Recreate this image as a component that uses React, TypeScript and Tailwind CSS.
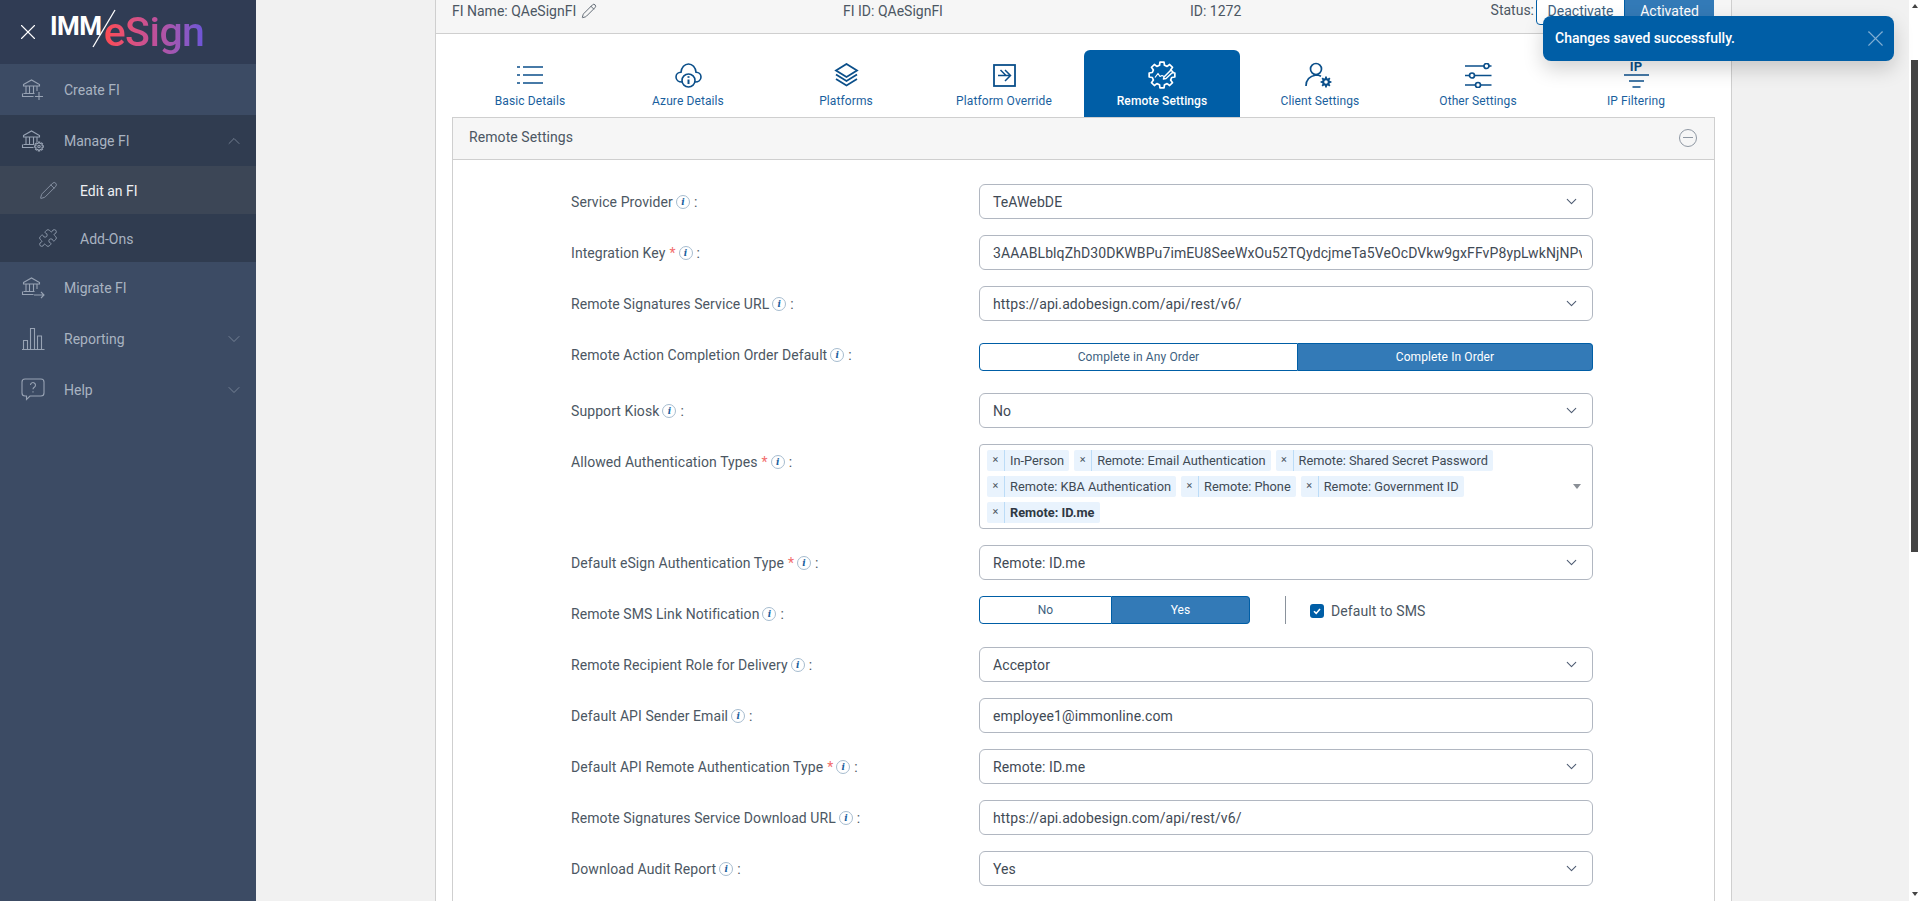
import React from 'react'
import { ChevronDown, ChevronUp, Pencil, Puzzle, X } from 'lucide-react'

function gearPath(cx: number, cy: number, outer: number, inner: number, teeth: number) {
  const pts: string[] = []
  const step = (Math.PI * 2) / teeth
  for (let i = 0; i < teeth; i++) {
    const a = i * step - Math.PI / 2
    const list: [number, number][] = [
      [inner, a - step * 0.32],
      [outer, a - step * 0.2],
      [outer, a + step * 0.2],
      [inner, a + step * 0.32],
    ]
    list.forEach(([r, t]) => pts.push(`${(cx + r * Math.cos(t)).toFixed(2)} ${(cy + r * Math.sin(t)).toFixed(2)}`))
  }
  return `M${pts.join('L')}Z`
}

function BankIcon({ children }: { children?: React.ReactNode }) {
  return (
    <svg width="24" height="22" viewBox="0 0 24 22" fill="none" stroke="#98a3b4" strokeWidth="1.1">
      <path d="M2.5 5.5 10.5 1l8 4.5V7h-16z" />
      <path d="M5 7v7M8.5 7v7M12.5 7v7M16 7v5" />
      <path d="M2.5 14.5h11M1.5 14.5v3h11" />
      {children}
    </svg>
  )
}

function CreateIcon() {
  return (
    <BankIcon>
      <path d="M18 13v8M14 17.5h8" />
    </BankIcon>
  )
}

function ManageIcon() {
  return (
    <BankIcon>
      <path d={gearPath(18, 16.5, 4.4, 3.3, 8)} />
      <circle cx="18" cy="16.5" r="1.2" />
    </BankIcon>
  )
}

function MigrateIcon() {
  return (
    <BankIcon>
      <path d="M13 18h10M20 15l3 3-3 3" />
    </BankIcon>
  )
}

function ReportIcon() {
  return (
    <svg width="24" height="24" viewBox="0 0 24 24" fill="none" stroke="#98a3b4" strokeWidth="1.1">
      <path d="M1 22.5h22.5M2.5 22.5v-9h4v9M9.5 22.5V1.5h4v21M16.5 22.5V9h4v13.5" />
    </svg>
  )
}

function HelpIcon() {
  return (
    <svg width="24" height="23" viewBox="0 0 24 23" fill="none" stroke="#98a3b4" strokeWidth="1.1">
      <path d="M4 1h16a3 3 0 0 1 3 3v11a3 3 0 0 1-3 3H9l-3.500 3.500V18H4a3 3 0 0 1-3-3V4a3 3 0 0 1 3-3z" />
      <path d="M9.500 7a2.500 2.500 0 1 1 3.800 2.200c-.9.500-1.300 1-1.300 2" />
      <path d="M12 13.200v1.300" />
    </svg>
  )
}

function ListIcon() {
  return (
    <svg width="26" height="22" viewBox="0 0 26 22" fill="none" stroke="#0b4f8a" strokeWidth="1.700">
      <path d="M6 3h20M6 11h20M6 19h20" />
      <path d="M0 3h3M0 11h3M0 19h3" />
    </svg>
  )
}

function CloudIcon() {
  return (
    <svg width="27" height="25" viewBox="0 0 27 25" fill="none" stroke="#0b4f8a" strokeWidth="1.6">
      <path d="M7 19C3.500 19 1 17 1 14c0-2.800 2.200-4.700 5-4.800C6.500 4.500 9.500 1 13.500 1s7 3.500 7.500 8.200c2.800.1 5 2 5 4.800 0 3-2.500 5-6 5" />
      <circle cx="13.500" cy="17.500" r="6.500" fill="#fff" />
      <path d="M13.500 16.500v4.500" strokeWidth="2" />
      <path d="M13.500 13.200v1.600" strokeWidth="2" />
    </svg>
  )
}

function LayersIcon() {
  return (
    <svg width="25" height="24" viewBox="0 0 25 24" fill="none" stroke="#0b4f8a" strokeWidth="1.8">
      <path d="M12.500 1 23 7.500 12.500 14 2 7.500z" />
      <path d="M2 11.500 12.500 18 23 11.500" />
      <path d="M2 16 12.500 22.500 23 16" />
    </svg>
  )
}

function OverrideIcon() {
  return (
    <svg width="23" height="23" viewBox="0 0 23 23" fill="none" stroke="#0b4f8a" strokeWidth="1.8">
      <rect x="1" y="1" width="21" height="21" />
      <path d="M5 11.500h12M12 6l5.500 5.500L12 17M7.500 6l5.500 5.500" strokeWidth="1.500" />
    </svg>
  )
}

function RemoteIcon() {
  return (
    <svg width="28" height="28" viewBox="0 0 28 28" fill="none" stroke="#fff" strokeWidth="1.700" strokeLinejoin="round">
      <path d={gearPath(14, 14, 13, 10, 8)} />
      <path d="M7 16.500l3-4 2 3 2-1 2 1" strokeWidth="1.200" />
      <path d="M16 16l7-7 2 2-7 6.500-2.500.5z" fill="#005ea6" strokeWidth="1.500" />
    </svg>
  )
}

function ClientIcon() {
  return (
    <svg width="30" height="27" viewBox="0 0 30 27" fill="none" stroke="#0b4f8a" strokeWidth="1.700">
      <circle cx="11" cy="7" r="5.500" />
      <path d="M1 24c0-6 4-10 10-11 2 0 3.500.500 5 1.200" />
      <path d={gearPath(21, 20, 5.500, 4, 8)} fill="#0b4f8a" stroke="none" />
      <circle cx="21" cy="20" r="1.800" fill="#fff" stroke="none" />
    </svg>
  )
}

function SlidersIcon() {
  return (
    <svg width="27" height="25" viewBox="0 0 27 25" fill="none" stroke="#0b4f8a" strokeWidth="1.700">
      <path d="M0 3h19M24 3h2.500M0 12.500h4M10 12.500h16.500M0 22h10M16 22h10.500" />
      <circle cx="21.500" cy="3" r="2.500" />
      <circle cx="7" cy="12.500" r="2.500" />
      <circle cx="13" cy="22" r="2.500" />
    </svg>
  )
}

function IpIcon() {
  return (
    <div className="flex flex-col items-center -mt-[2px]">
      <span className="text-[13px] leading-[13px] font-bold text-[#0b4f8a]">IP</span>
      <svg width="27" height="15" viewBox="0 0 27 15" fill="none" stroke="#0b4f8a" strokeWidth="1.700">
        <path d="M1 2h25M6 8h15M9.500 14h8" />
      </svg>
    </div>
  )
}

function Info() {
  return (
    <span className="inline-flex items-center justify-center w-[14px] h-[14px] rounded-full border border-[#a6bccf] bg-white ml-[3px] font-['DejaVu_Serif',serif] italic font-bold text-[9px] leading-none tracking-normal text-[#1b5f9e]">
      i
    </span>
  )
}

function FieldLabel({ text, required }: { text: string; required?: boolean }) {
  return (
    <div className="w-[408px] shrink-0 h-[35px] pt-[1px] flex items-center text-[14px] tracking-[0.08px] text-[#4c5763]">
      <span>{text}</span>
      {required && <span className="ml-[4px] text-[#f26d6d]">*</span>}
      <Info />
      <span className="ml-[4px]">:</span>
    </div>
  )
}

function Select({ value }: { value: string }) {
  return (
    <div className="w-[614px] h-[35px] flex items-center justify-between pl-[13px] pr-[12px] bg-white border border-[#b1b7c1] rounded-[6px] text-[14px] tracking-[0.1px] text-[#3f4a55]">
      <span className="pt-[1px]">{value}</span>
      <ChevronDown className="w-[17px] h-[17px] text-[#4f5d73]" strokeWidth={1.5} />
    </div>
  )
}

function TextField({ value }: { value: string }) {
  return (
    <div className="w-[614px] h-[35px] flex items-center pl-[13px] pr-[10px] bg-white border border-[#b1b7c1] rounded-[6px] text-[14px] tracking-[0.1px] text-[#3f4a55]">
      <div className="flex-1 min-w-0 pt-[1px] overflow-hidden whitespace-nowrap">{value}</div>
    </div>
  )
}

function Toggle({ left, right, leftW, rightW }: { left: string; right: string; leftW: string; rightW: string }) {
  return (
    <div className="flex h-[28px] text-[12px] tracking-[0.1px]">
      <div className={`${leftW} flex items-center justify-center bg-white border border-[#005ea6] rounded-l-[4px] text-[#3e5f80]`}>{left}</div>
      <div className={`${rightW} flex items-center justify-center bg-[#337ab7] border border-[#005ea6] border-l-0 rounded-r-[4px] text-white`}>{right}</div>
    </div>
  )
}

function Tag({ text, bold }: { text: string; bold?: boolean }) {
  return (
    <div className="flex h-[21px] items-stretch rounded-[2px] bg-[#e9f3fd] text-[12.8px] text-[#3f4a55]">
      <span className="w-[18px] flex items-center justify-center border-r border-[#bcdcf7] text-[11px] text-[#4c5763]">×</span>
      <span className={`px-[5px] flex items-center ${bold ? 'font-bold text-[#2f3843]' : ''}`}>{text}</span>
    </div>
  )
}

const navItems = [
  { label: 'Create FI', icon: <CreateIcon />, bg: 'bg-[#3c4b64]' },
  { label: 'Manage FI', icon: <ManageIcon />, bg: 'bg-[#303c50]', open: true },
]

const tabs = [
  { label: 'Basic Details', icon: <ListIcon /> },
  { label: 'Azure Details', icon: <CloudIcon /> },
  { label: 'Platforms', icon: <LayersIcon /> },
  { label: 'Platform Override', icon: <OverrideIcon /> },
  { label: 'Remote Settings', icon: <RemoteIcon />, active: true },
  { label: 'Client Settings', icon: <ClientIcon /> },
  { label: 'Other Settings', icon: <SlidersIcon /> },
  { label: 'IP Filtering', icon: <IpIcon /> },
]

function NavRow({ label, icon, bg, chevron }: { label: string; icon: React.ReactNode; bg: string; chevron?: 'up' | 'down' }) {
  return (
    <div className={`${bg} h-[51px] flex items-center pl-[21px] pr-[12px] text-[14px] text-[#a9b3c1]`}>
      <span className="w-[43px] shrink-0">{icon}</span>
      <span className="flex-1 pt-[2px]">{label}</span>
      {chevron === 'up' && <ChevronUp className="w-[20px] h-[20px] text-[#8793a5]" strokeWidth={0.9} />}
      {chevron === 'down' && <ChevronDown className="w-[20px] h-[20px] text-[#8793a5]" strokeWidth={0.9} />}
    </div>
  )
}

function Sidebar() {
  return (
    <aside className="w-[256px] shrink-0 h-full bg-[#3c4b64]">
      <div className="h-[64px] bg-[#303c54] flex items-center pl-[15px]">
        <X className="w-[26px] h-[26px] text-white" strokeWidth={1} />
        <div className="relative ml-[9px] flex items-center h-[64px]">
          <span className="text-[26px] font-bold text-white tracking-[-0.5px] -mt-[12px]">IMM</span>
          <svg className="absolute left-[1px] top-0 ml-[41px]" width="24" height="50" viewBox="0 0 24 50" fill="none" stroke="#fff" strokeWidth="1.300">
            <path d="M1 47 23 10" />
          </svg>
          <span className="ml-[2px] mt-[1px] text-[41px] font-medium tracking-[-0.5px] bg-gradient-to-r from-[#ff4a50] via-[#c0509a] to-[#6c55d8] bg-clip-text text-transparent">
            eSign
          </span>
        </div>
      </div>
      {navItems.map(item => (
        <NavRow key={item.label} label={item.label} icon={item.icon} bg={item.bg} chevron={item.open ? 'up' : undefined} />
      ))}
      <div className="h-[48px] bg-[#3c4656] flex items-center pl-[39px] text-[14px] text-[#eef0f3]">
        <Pencil className="w-[19px] h-[19px] text-[#98a3b4] mr-[22px]" strokeWidth={1} />
        <span className="pt-[2px]">Edit an FI</span>
      </div>
      <div className="h-[48px] bg-[#303c50] flex items-center pl-[38px] text-[14px] text-[#a9b3c1]">
        <Puzzle className="w-[20px] h-[20px] text-[#98a3b4] mr-[22px]" strokeWidth={1} />
        <span className="pt-[2px]">Add-Ons</span>
      </div>
      <NavRow label="Migrate FI" icon={<MigrateIcon />} bg="bg-[#3c4b64]" />
      <NavRow label="Reporting" icon={<ReportIcon />} bg="bg-[#3c4b64]" chevron="down" />
      <NavRow label="Help" icon={<HelpIcon />} bg="bg-[#3c4b64]" chevron="down" />
    </aside>
  )
}

function TopInfo() {
  return (
    <div className="h-[34px] shrink-0 bg-[#f6f6f6] border-b border-[#cfcfcf] flex items-start pl-[16px] pr-[17px] text-[14px] leading-[22px] text-[#4c5763]">
      <div className="w-[391px] flex items-center">
        FI Name: QAeSignFI
        <Pencil className="w-[16px] h-[16px] ml-[5px] text-[#4c5763]" strokeWidth={1.3} />
      </div>
      <div className="w-[347px]">FI ID: QAeSignFI</div>
      <div className="flex-1">ID: 1272</div>
      <div className="flex items-start">
        <span className="-mt-[1px] mr-[2px]">Status:</span>
        <div className="flex h-[28px] -mt-[3px] text-[14px]">
          <div className="w-[89px] flex items-center justify-center bg-white border border-[#005ea6] rounded-l-[4px] text-[#3e5f80]">Deactivate</div>
          <div className="w-[89px] flex items-center justify-center bg-[#337ab7] rounded-r-[4px] text-white">Activated</div>
        </div>
      </div>
    </div>
  )
}

function Tabs() {
  return (
    <div className="grid grid-cols-[repeat(8,156px)] gap-[2px] mx-[16px] mt-[16px] h-[67px]">
      {tabs.map(tab => (
        <div
          key={tab.label}
          className={`flex flex-col items-center rounded-t-[6px] text-[12px] tracking-[0.1px] ${tab.active ? 'bg-[#005ea6] text-white font-medium' : 'text-[#1a5f9e]'}`}
        >
          <div className="h-[26px] mt-[12px] flex items-center justify-center">{tab.icon}</div>
          <span className="mt-[5px] leading-[16px]">{tab.label}</span>
        </div>
      ))}
    </div>
  )
}

function FormRows() {
  return (
    <div className="flex flex-col gap-[16px] pt-[24px] pl-[118px]">
      <div className="flex">
        <FieldLabel text="Service Provider" />
        <Select value="TeAWebDE" />
      </div>
      <div className="flex">
        <FieldLabel text="Integration Key" required />
        <TextField value="3AAABLblqZhD30DKWBPu7imEU8SeeWxOu52TQydcjmeTa5VeOcDVkw9gxFFvP8ypLwkNjNPv" />
      </div>
      <div className="flex">
        <FieldLabel text="Remote Signatures Service URL" />
        <Select value="https://api.adobesign.com/api/rest/v6/" />
      </div>
      <div className="flex h-[40px]">
        <FieldLabel text="Remote Action Completion Order Default" />
        <div className="pt-[6px]">
          <Toggle left="Complete in Any Order" right="Complete In Order" leftW="w-[319px]" rightW="w-[295px]" />
        </div>
      </div>
      <div className="flex">
        <FieldLabel text="Support Kiosk" />
        <Select value="No" />
      </div>
      <div className="flex">
        <FieldLabel text="Allowed Authentication Types" required />
        <div className="w-[614px] h-[85px] flex items-center bg-white border border-[#b1b7c1] rounded-[4px] pl-[7px] pr-[11px]">
          <div className="flex flex-wrap content-start gap-[5px] flex-1">
            <Tag text="In-Person" />
            <Tag text="Remote: Email Authentication" />
            <Tag text="Remote: Shared Secret Password" />
            <Tag text="Remote: KBA Authentication" />
            <Tag text="Remote: Phone" />
            <Tag text="Remote: Government ID" />
            <Tag text="Remote: ID.me" bold />
          </div>
          <span className="w-0 h-0 border-x-[4.500px] border-x-transparent border-t-[5px] border-t-[#8a8f96]" />
        </div>
      </div>
      <div className="flex">
        <FieldLabel text="Default eSign Authentication Type" required />
        <Select value="Remote: ID.me" />
      </div>
      <div className="flex h-[35px]">
        <FieldLabel text="Remote SMS Link Notification" />
        <Toggle left="No" right="Yes" leftW="w-[133px]" rightW="w-[138px]" />
        <div className="w-px h-[28px] bg-[#8a929c] ml-[35px]" />
        <div className="flex items-center h-[28px] ml-[24px] mt-[1px] text-[14px] tracking-[0.1px] text-[#4c5763]">
          <span className="w-[14px] h-[14px] rounded-[3px] bg-[#005ea6] flex items-center justify-center mr-[7px]">
            <svg width="10" height="10" viewBox="0 0 10 10" fill="none" stroke="#fff" strokeWidth="1.600">
              <path d="M2 5.200 4.200 7.400 8 3" />
            </svg>
          </span>
          Default to SMS
        </div>
      </div>
      <div className="flex">
        <FieldLabel text="Remote Recipient Role for Delivery" />
        <Select value="Acceptor" />
      </div>
      <div className="flex">
        <FieldLabel text="Default API Sender Email" />
        <TextField value="employee1@immonline.com" />
      </div>
      <div className="flex">
        <FieldLabel text="Default API Remote Authentication Type" required />
        <Select value="Remote: ID.me" />
      </div>
      <div className="flex">
        <FieldLabel text="Remote Signatures Service Download URL" />
        <TextField value="https://api.adobesign.com/api/rest/v6/" />
      </div>
      <div className="flex">
        <FieldLabel text="Download Audit Report" />
        <Select value="Yes" />
      </div>
    </div>
  )
}

function Toast() {
  return (
    <div className="absolute left-[1543px] top-[16px] w-[351px] h-[45px] flex items-center justify-between pl-[12px] pr-[5px] rounded-[8px] bg-[#005ea6] text-[14px] font-medium text-white shadow-[0_8px_20px_rgba(0,0,0,0.18)]">
      Changes saved successfully.
      <X className="w-[27px] h-[27px] text-[#80aed3]" strokeWidth={1} />
    </div>
  )
}

function Scrollbar() {
  return (
    <div className="w-[11px] shrink-0 h-full bg-white flex flex-col items-start pl-[2px]">
      <span className="mt-[4px] ml-[1px] w-0 h-0 border-x-[3px] border-x-transparent border-b-[4px] border-b-[#444]" />
      <div className="mt-[52px] w-[7px] h-[492px] bg-[#444]" />
      <span className="mt-auto mb-[5px] ml-[1px] w-0 h-0 border-x-[3px] border-x-transparent border-t-[4px] border-t-[#444]" />
    </div>
  )
}

export default function App() {
  return (
    <div className="relative h-screen overflow-hidden flex bg-[#f1f1f1] font-['Roboto',sans-serif]">
      <Sidebar />
      <main className="flex-1 min-w-0 h-full pl-[179px] pr-[177px]">
        <div className="h-full flex flex-col bg-white border-x border-[#cfcfcf]">
          <TopInfo />
          <Tabs />
          <div className="mx-[16px] flex-1 border-x border-[#cfcfcf] bg-white min-h-0">
            <div className="h-[43px] -mx-px flex items-center justify-between bg-[#f6f6f6] border border-[#cfcfcf] pb-[2px] pl-[16px] pr-[17px] text-[14px] tracking-[0.08px] text-[#4c5763]">
              Remote Settings
              <span className="w-[18px] h-[18px] rounded-full border border-[#8f98a3] flex items-center justify-center">
                <span className="w-[10px] h-[1.500px] bg-[#8f98a3]" />
              </span>
            </div>
            <FormRows />
          </div>
        </div>
      </main>
      <Scrollbar />
      <Toast />
    </div>
  )
}
